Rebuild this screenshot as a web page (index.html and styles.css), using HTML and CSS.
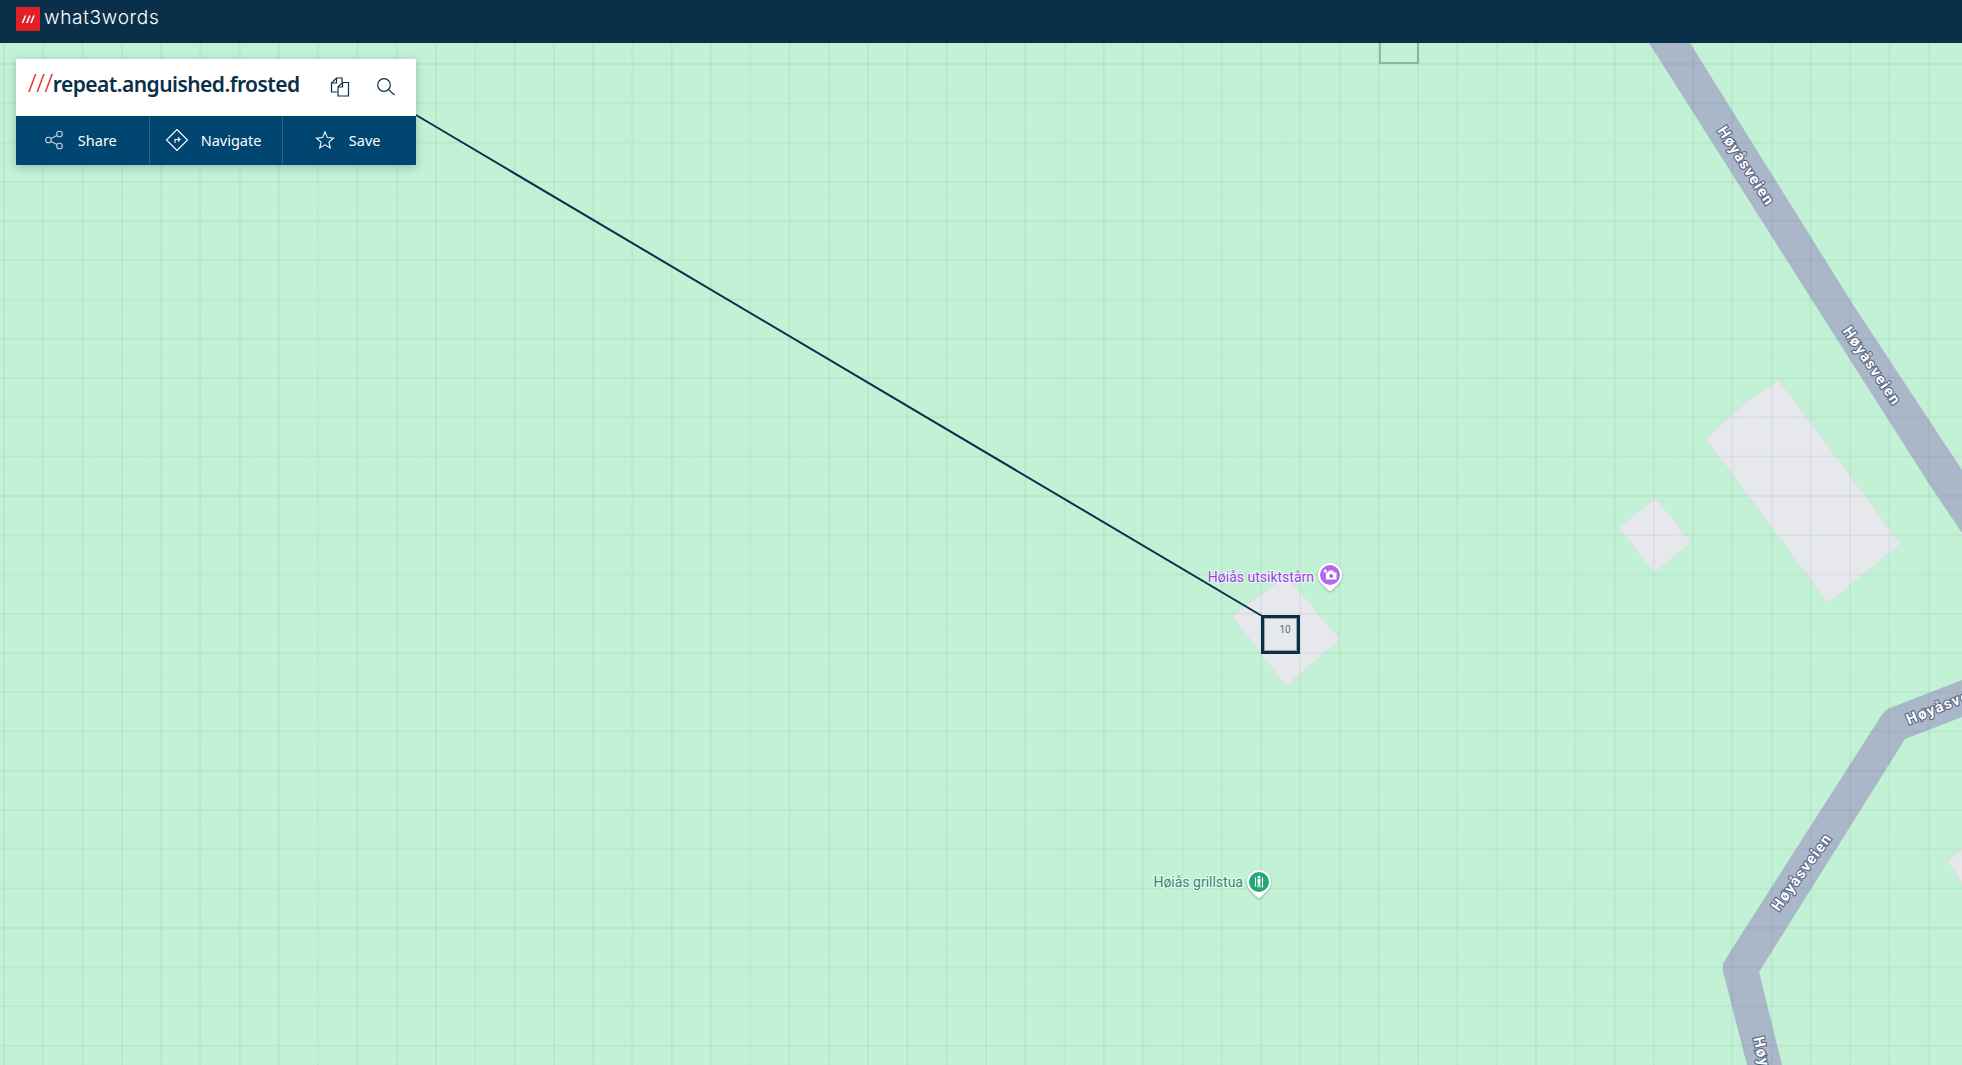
FILE: index.html
```html
<!DOCTYPE html>
<html lang="en">
<head>
<meta charset="utf-8">
<title>what3words</title>
<link rel="stylesheet" href="styles.css">
</head>
<body>
<header class="topbar">
  <a class="brand">
    <span class="brand-mark"><svg class="brand-slashes" viewBox="0 0 24 24"><path d="M6.500 16 9.500 8.500M10.800 16 13.800 8.500M15 16 18 8.500"/></svg></span>
    <span class="brand-name">what3words</span>
  </a>
</header>
<main class="map">
  <svg class="map-base" viewBox="0 43 1962 1022">
    <polygon class="building" points="1778.5,380 1739,408 1706,439 1828,603 1900.6,544"/>
    <polygon class="building" points="1655.5,498 1619,528 1654,573 1691,542"/>
    <polygon class="building" points="1286,576 1232,616 1286,686 1340,639"/>
    <polygon class="building" points="1962,848 1948,862 1962,884"/>
    <polygon class="road" points="1649,43 1690,43 1852,303 1927,417 1962,470 1962,533 1931,487 1812,300"/>
    <path class="road" d="M1962 680 1890 708Q1885 710 1881 716L1725 960Q1722 965 1723 971L1747 1065 1782 1065 1759 972 1905 739 1962 717Z"/>
    <rect class="tile" x="1380" y="20" width="38" height="43"/>
  </svg>
  <div class="grid"></div>
  <svg class="map-top" viewBox="0 43 1962 1022">
    <text class="road-name" transform="translate(1746 166) rotate(57)">Høyåsveien</text>
    <text class="road-name" transform="translate(1872 366) rotate(56)">Høyåsveien</text>
    <text class="road-name" transform="translate(1801.5 872) rotate(-54)">Høyåsveien</text>
    <text class="road-name road-name-start" transform="translate(1907 720) rotate(-22)">Høyåsveien</text>
    <text class="road-name road-name-start" transform="translate(1758 1037) rotate(77)">Høyåsveien</text>
    <line class="pointer" x1="416" y1="115" x2="1262" y2="616"/>
    <rect class="square" x="1262.5" y="616.5" width="36" height="36"/>
    <rect class="square-inner" x="1264.500" y="618.500" width="32" height="32"/>
    <text class="house-number" x="1285" y="633">10</text>
    <text class="poi poi-purple" x="1314" y="582">Høiås utsiktstårn</text>
    <text class="poi poi-green" x="1243" y="887">Høiås grillstua</text>
    <g class="pin" transform="translate(1330 575)">
      <path class="pin-halo" d="M-8.500 8.500A12 12 0 1 1 8.500 8.500L2 15Q0 17-2 15Z"/>
      <circle class="pin-purple" r="10"/>
      <path class="pin-glyph" d="M-4-2.500H-2L-1-4.500H3L4-2.500H6.500V4.500H-4Z"/>
      <circle class="pin-lens-purple" cx="1.200" cy="1" r="2"/>
      <path class="pin-plus" d="M-6.500-4H-3M-4.800-5.700V-2.300"/>
    </g>
    <g class="pin" transform="translate(1259 882)">
      <path class="pin-halo" d="M-8.500 8.500A12 12 0 1 1 8.500 8.500L2 15Q0 17-2 15Z"/>
      <circle class="pin-green" r="10"/>
      <circle class="pin-green-fill" cx="0" cy="-4.800" r="1.400"/>
      <path class="pin-green-glyph" d="M-3.500-4.500V4.500M0-2.500V1.500M-1.200 5.500-.5 1.500H.5L1.200 5.500M3.500-4.500V5.500"/>
      <path class="pin-green-fill" d="M-1.500-2.800H1.500V1H-1.500Z"/>
    </g>
  </svg>
  <section class="card">
    <div class="card-head">
      <h1 class="address"><span class="slashes">///</span>repeat.anguished.frosted</h1>
      <svg class="icon-copy" viewBox="0 0 20 20"><path d="M7 15H1.500V6L6.500 1H12V5"/><path d="M1.500 6H6.500V1"/><path d="M8 10 12.500 5.500H18.500V19H8Z"/><path d="M8 10H12.500V5.500"/></svg>
      <svg class="icon-search" viewBox="0 0 20 20"><circle cx="8" cy="8" r="6.300"/><path d="M12.600 12.600 18.500 18"/></svg>
    </div>
    <nav class="actions">
      <a class="action">
        <svg class="action-icon" viewBox="0 0 22 22"><circle class="dim" cx="16.500" cy="5" r="2.800"/><circle class="dim" cx="5.500" cy="11" r="2.800"/><circle class="dim" cx="16.500" cy="17" r="2.800"/><path class="dim" d="M8 9.600 14 6.400M8 12.400 14 15.600"/></svg>
        <span>Share</span>
      </a>
      <a class="action">
        <svg class="action-icon" viewBox="0 0 22 22"><path d="M11 .5 21.500 11 11 21.500 .5 11Z"/><path d="M9 14V10.500H13.500M12 8.500 14 10.500 12 12.500"/></svg>
        <span>Navigate</span>
      </a>
      <a class="action">
        <svg class="action-icon" viewBox="0 0 22 22"><path d="M11 3 13.400 8.600 19.500 9.100 14.900 13.100 16.300 19 11 15.900 5.700 19 7.100 13.100 2.500 9.100 8.600 8.600Z"/></svg>
        <span>Save</span>
      </a>
    </nav>
  </section>
</main>
</body>
</html>
```
FILE: styles.css
```css
* { box-sizing: border-box; }
html, body { height: 100%; }
body {
  margin: 0;
  display: flex;
  flex-direction: column;
  height: 1065px;
  overflow: hidden;
  font-family: "Noto Sans", "Open Sans", sans-serif;
  background: #c2f1d5;
}
.topbar {
  flex: 0 0 43px;
  background: #0a3049;
  padding: 7px 16px 0;
}
.brand { display: flex; align-items: flex-start; gap: 4px; }
.brand-mark { width: 24px; height: 24px; background: #e11f26; display: block; }
.brand-slashes { display: block; width: 24px; height: 24px; fill: none; stroke: #fff; stroke-width: 1.6; }
.brand-name {
  font-family: "Inter", sans-serif;
  font-weight: 300;
  font-size: 19px;
  line-height: 22px;
  letter-spacing: 0.7px;
  color: #fff;
}
.map { position: relative; flex: 1; overflow: hidden; background: #c2f1d5; }
.map-base, .map-top { position: absolute; left: 0; top: 0; width: 1962px; height: 1022px; display: block; }
.grid {
  position: absolute;
  inset: 0;
  background-image:
    linear-gradient(to right, rgba(40, 70, 60, .055) 2px, transparent 2px),
    linear-gradient(to bottom, rgba(40, 70, 60, .055) 2px, transparent 2px);
  background-size: 39.29px 39.28px;
  background-position: 3px 20px;
}
.building { fill: #e6e8ec; stroke: #dcdfe6; stroke-width: 1; }
.road { fill: #a9b7c9; }
.tile { fill: none; stroke: #8fb8ae; stroke-width: 2; }
.road-name {
  font-family: "Roboto", sans-serif;
  font-weight: 700;
  font-size: 15px;
  letter-spacing: 1.3px;
  fill: #fff;
  stroke: #56637f;
  stroke-width: 2.2px;
  paint-order: stroke;
  text-anchor: middle;
  dominant-baseline: central;
}
.road-name-start { text-anchor: start; }
.pointer { stroke: #0a3049; stroke-width: 2; }
.square { fill: none; stroke: #0a3049; stroke-width: 3; }
.square-inner { fill: none; stroke: #9aa6ad; stroke-width: 1; }
.house-number { font-family: "Roboto", sans-serif; font-size: 10px; fill: #5f6c7c; text-anchor: middle; }
.poi {
  font-family: "Roboto", sans-serif;
  font-size: 14px;
  stroke: #fff;
  stroke-width: 2px;
  stroke-opacity: .65;
  paint-order: stroke;
  text-anchor: end;
}
.poi-purple { fill: #a03de6; }
.poi-green { fill: #2f8a6c; }
.pin { filter: drop-shadow(0 1px 1px rgba(0, 0, 0, .25)); }
.pin-halo { fill: #fff; }
.pin-purple { fill: #b266f2; }
.pin-green { fill: #23a877; }
.pin-glyph { fill: #fff; }
.pin-lens-purple { fill: #b266f2; }
.pin-plus { fill: none; stroke: #fff; stroke-width: 1.3; }
.pin-green-glyph { fill: none; stroke: #fff; stroke-width: 1.1; }
.pin-green-fill { fill: #fff; }

.card {
  position: absolute;
  left: 16px;
  top: 16px;
  width: 400px;
  box-shadow: 0 2px 8px rgba(0, 40, 60, .25);
}
.card-head {
  height: 57px;
  background: #fff;
  display: flex;
  align-items: center;
  padding-left: 12px;
}
.address {
  margin: 0;
  flex: 1;
  font-size: 21px;
  letter-spacing: -0.55px;
  line-height: 57px;
  font-weight: 600;
  color: #0a3049;
  white-space: nowrap;
  position: relative;
  top: -4px;
}
.slashes { color: #e11f26; font-weight: 300; font-size: 25px; letter-spacing: -0.4px; }
.icon-copy, .icon-search { width: 20px; height: 20px; fill: none; stroke: #0a3049; stroke-width: 1.2; }
.icon-copy { margin-right: 26px; position: relative; top: -1px; }
.icon-search { margin-right: 20px; position: relative; top: -1px; }
.actions { display: flex; height: 49px; background: #004670; }
.action {
  flex: 1;
  display: flex;
  align-items: center;
  justify-content: center;
  gap: 13px;
  padding: 0 5px 2px 0;
  color: #fff;
  font-size: 14.5px;
  border-left: 1px solid #2b6687;
}
.action:first-child { border-left: 0; }
.action-icon { width: 22px; height: 22px; fill: none; stroke: #fff; stroke-width: 1.1; flex: none; }
.action-icon .dim { stroke: #c4d2dc; }
```
